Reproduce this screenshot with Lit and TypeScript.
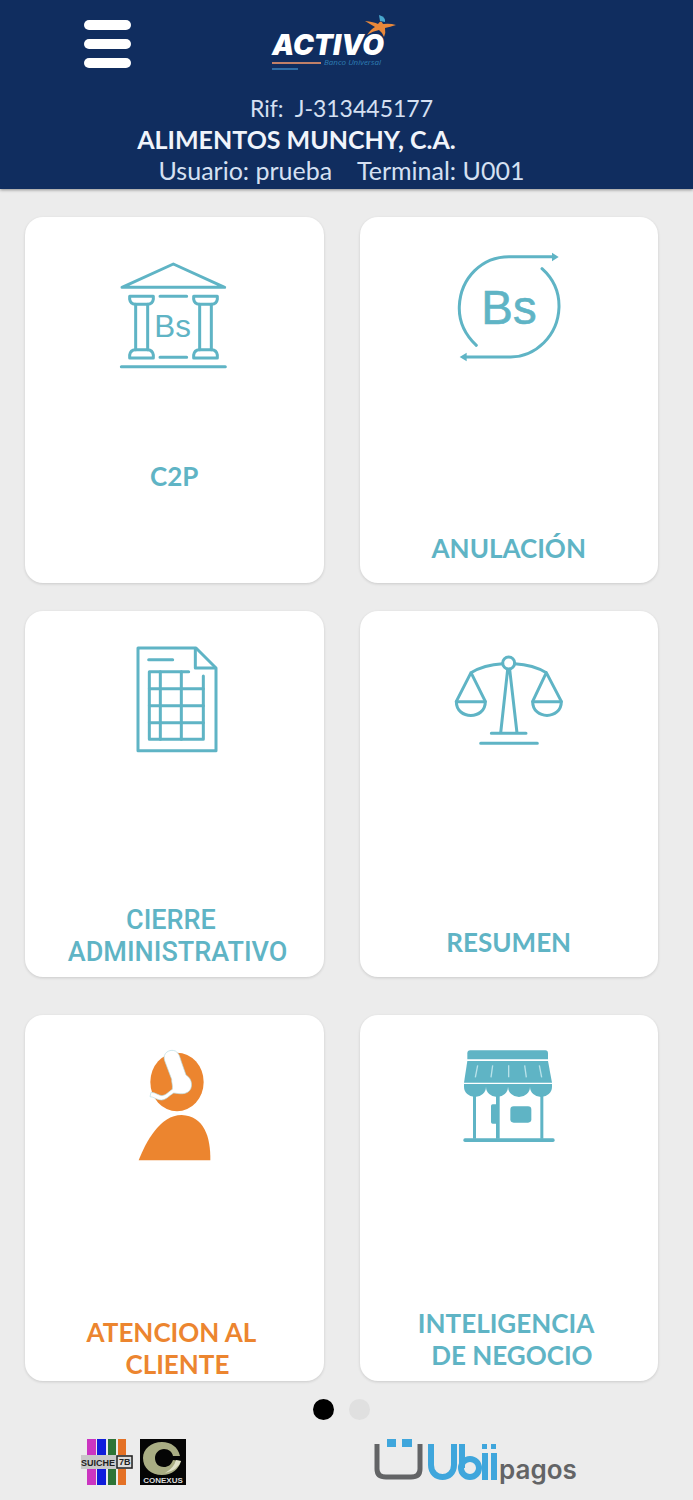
import { LitElement, html, css, svg, type TemplateResult } from "lit";
import { customElement, property } from "lit/decorators.js";

const bank = svg`<svg viewBox="27 15 390 390" aria-hidden="true">
  <g class="line">
    <path d="M66 142 L220 72 L374 142 Z"/>
    <path d="M64 380H376M180 169H260M180 352H260"/>
    <path d="M89 169H160V178Q158 192 143 193H106Q91 192 89 178Z"/>
    <path d="M281 169H352V178Q350 192 335 193H298Q283 192 281 178Z"/>
    <path d="M89 354H160V345Q158 330 143 329H106Q91 330 89 345Z"/>
    <path d="M281 354H352V345Q350 330 335 329H298Q283 330 281 345Z"/>
    <path d="M107 193V329M143 193V329M299 193V329M334 193V329"/>
  </g>
  <text class="bs" x="163" y="292" font-size="94">Bs</text>
</svg>`;

const refund = svg`<svg viewBox="40 15 390 390" aria-hidden="true">
  <g class="line">
    <path d="M137 316C97 278 84 240 86 198C90 112 155 50 235 50H368"/>
    <path d="M334 86C372 120 386 160 385 202C382 288 315 350 240 351H104"/>
  </g>
  <path class="solid" d="M364 38L384 51L364 64ZM108 338L87 351L108 364Z"/>
  <text class="bs thick" x="152" y="253" font-size="142">Bs</text>
</svg>`;

const sheet = svg`<svg viewBox="-33 27 390 390" aria-hidden="true">
  <g class="line">
    <path d="M54 54H228L288 114V362H54Z"/>
    <path d="M226 56V114H286M86 89H158"/>
    <path d="M206 125H88V328H250V138"/>
    <path d="M88 176H250M88 227H250M88 278H250M121 125V328M184 125V328"/>
  </g>
</svg>`;

const scales = svg`<svg viewBox="10 -3 390 390" aria-hidden="true">
  <g class="line">
    <circle cx="204" cy="69" r="18"/>
    <path d="M186 71Q130 74 91 98L47 184M91 98L134 184M222 71Q278 74 317 98L276 184M317 98L362 184"/>
    <path d="M47 185H134C134 240 47 240 47 185ZM276 185H362C362 240 276 240 276 185Z"/>
    <path d="M201 88L180 279M207 88L229 279M152 280H256M120 310H290"/>
  </g>
</svg>`;

const agent = svg`<svg viewBox="-33 39 390 390" aria-hidden="true">
  <ellipse class="solid" cx="171" cy="156" rx="80" ry="88"/>
  <path class="solid" d="M56 391C78 335 120 255 185 255C252 258 272 320 271 391Z"/>
  <path class="headset" d="M134 92C126 68 150 56 166 63C178 69 180 84 185 98L198 135C218 146 220 176 204 186C190 195 174 190 161 189C146 198 138 210 124 210C110 210 101 200 90 200L93 187C106 187 116 197 126 197C138 196 145 186 157 178C159 165 154 156 155 148Z"/>
</svg>`;

const shop = svg`<svg viewBox="10 39 390 390" aria-hidden="true">
  <g class="solid">
    <path d="M80 88V70Q80 61 89 61H314Q322 61 322 70V88Z"/>
    <path d="M80 93H322L334 158H70Z"/>
    <path d="M70 162H136V170A33 31 0 0 1 70 170ZM136 162H202V170A33 31 0 0 1 136 170ZM202 162H268V170A33 31 0 0 1 202 170ZM268 162H334V170A33 31 0 0 1 268 170Z"/>
    <path d="M97 196H106V326H97ZM166 196H177V326H166ZM299 196H308V326H299Z"/>
    <rect x="151" y="223" width="20" height="58" rx="5"/>
    <rect x="209" y="229" width="63" height="49" rx="10"/>
    <rect x="68" y="325" width="274" height="11" rx="5"/>
  </g>
  <path class="folds" d="M111 106L104 142M156 106L151 142M204 106V142M252 106L257 142M296 106L303 142"/>
</svg>`;

const activoLogo = svg`<svg class="activo" viewBox="0 0 141 60" role="img" aria-label="Activo Banco Universal">
  <text class="activo-name" x="1" y="41" font-size="28">ACTIVO</text>
  <path fill="#e9883a" d="M94 7Q103 8 107 10Q110 5 112 10Q119 9 125 11Q119 13 114 14Q115 19 113 23Q111 18 108 16Q102 17 96 21Q100 15 104 13Z"/>
  <path fill="#49a8cf" d="M108 1Q115 3 114 8L109 7Z"/>
  <path fill="#c08068" d="M1 48H50V50H1Z"/>
  <text class="activo-sub" x="53" y="51" font-size="8">Banco Universal</text>
  <path fill="#2f6da5" d="M1 54H27V56H1Z"/>
</svg>`;

const suiche = svg`<svg class="suiche" viewBox="0 0 54 46" role="img" aria-label="Suiche 7B">
  <path fill="#cb35c1" d="M7 0H16V46H7Z"/>
  <path fill="#101ddb" d="M17 0H26V46H17Z"/>
  <path fill="#2d7436" d="M28 0H36V46H28Z"/>
  <path fill="#e47125" d="M38 0H46V46H38Z"/>
  <path fill="#c9c9c9" d="M1 16H53V30H1Z"/>
  <text x="1" y="27" class="suiche-name">SUICHE</text>
  <rect x="37" y="17" width="15" height="12" fill="#ddd" stroke="#222" stroke-width="1.500"/>
  <text x="39" y="26" class="suiche-name">7B</text>
</svg>`;

const conexus = svg`<svg class="conexus" viewBox="0 0 46 46" role="img" aria-label="Conexus">
  <path fill="#050505" d="M0 0H46V46H0Z"/>
  <path fill="#a9ad83" d="M40 17C38 8 31 3 22 3C11 3 3 10 3 19C3 29 11 36 22 36C32 36 39 30 41 22L33 21C31 26 28 28 24 28C18 28 15 24 15 19C15 14 19 10 24 10C29 10 32 13 33 17Z"/>
  <path fill="#dfe0c8" d="M25 34Q38 31 41 22L36 21Q34 29 25 34Z"/>
  <text x="23" y="44" font-size="8" class="conexus-name" text-anchor="middle">CONEXUS</text>
</svg>`;

const ubii = svg`<svg class="ubii" viewBox="0 0 206 50" role="img" aria-label="Ubii pagos">
  <path fill="none" stroke="#636466" stroke-width="5" d="M3 6V31Q3 39 12 39H37Q46 39 46 31V6"/>
  <path fill="#3fa6dc" d="M13 1H22V9H13ZM28 1H38V9H28Z"/>
  <g fill="none" stroke="#3fa6dc" stroke-width="6">
    <path d="M57 6V27C57 43 80 43 80 27V6"/>
    <path d="M88 6V30"/>
    <circle cx="96" cy="30" r="9"/>
    <path d="M111 15V42M120 15V42"/>
  </g>
  <path fill="#3fa6dc" d="M108 6H113V11H108ZM117 6H122V11H117Z"/>
  <text x="125" y="41" font-size="26" class="pagos">pagos</text>
</svg>`;

@customElement("menu-card")
export class MenuCard extends LitElement {
  @property() label = "";
  @property({ attribute: false }) icon?: TemplateResult;

  static styles = css`
    :host {
      display: block;
      --ink: #5fb4c5;
      --drop: 19px;
      --face: 26px/32px Lato, sans-serif;
    }
    :host([accent]) { --ink: #ec852f; }
    :host([raised]) { --drop: 91px; }
    :host([low]) { --drop: 1px; }
    :host([mid]) { --drop: 10px; }
    :host([plain]) { --face: 27px/32px Roboto, sans-serif; --weight: 500; --drop: 9px; }
    .card {
      width: 100%;
      min-height: 366px;
      box-sizing: border-box;
      display: flex;
      flex-direction: column;
      align-items: center;
      justify-content: space-between;
      padding: 28px 0 var(--drop);
      border: 0;
      border-radius: 18px;
      background: #fff;
      box-shadow: 0 1px 3px rgba(0, 0, 0, 0.14);
      color: var(--ink);
      font: var(--weight, 700) var(--face);
      cursor: pointer;
    }
    .label { white-space: pre; }
    svg { display: block; width: 130px; height: 130px; }
    .line { fill: none; stroke: var(--ink); stroke-width: 9; stroke-linecap: round; stroke-linejoin: round; }
    .solid { fill: var(--ink); }
    .bs { fill: var(--ink); font-family: "Liberation Sans", sans-serif; font-weight: 400; }
    .thick { stroke: var(--ink); stroke-width: 2; }
    .headset { fill: #fff; stroke: #b5dde6; stroke-width: 2; }
    .folds { fill: none; stroke: #b9e2ea; stroke-width: 4; }
  `;

  render() {
    return html`<button class="card" type="button">${this.icon}<span class="label">${this.label}</span></button>`;
  }
}

@customElement("app-root")
export class AppRoot extends LitElement {
  static styles = css`
    :host {
      display: block;
      min-height: 100vh;
      background: #ececec;
      font-family: Lato, sans-serif;
    }
    header {
      background: #102d5f;
      color: #d5e0f2;
      padding: 14px 35px 3px 25px;
      box-shadow: 0 1px 3px rgba(0, 0, 0, 0.4);
    }
    .bar { display: grid; grid-template-columns: 1fr auto 1fr; align-items: center; }
    .menu {
      justify-self: start;
      margin-left: 59px;
      width: 47px;
      height: 48px;
      padding: 0;
      border: 0;
      background: none;
      display: flex;
      flex-direction: column;
      justify-content: space-between;
      cursor: pointer;
    }
    .menu span { height: 10px; border-radius: 5px; background: #fff; }
    .activo { display: block; width: 141px; height: 60px; }
    .activo-name { fill: #fff; font-family: Inter, sans-serif; font-weight: 900; font-style: italic; }
    .activo-sub { fill: #2f7fb5; font-family: "Open Sans", sans-serif; font-style: italic; }
    .info { padding-top: 19px; text-align: center; font-size: 25px; line-height: 31px; }
    .info p { margin: 0; white-space: pre; }
    .info .rif { font-size: 23px; }
    .info .company { padding-right: 90px; color: #f0f4fb; font-weight: 700; }
    main {
      display: grid;
      grid-template-columns: 1fr 1fr;
      column-gap: 36px;
      row-gap: 28px;
      padding: 28px 35px 0 25px;
    }
    .last { margin-top: 10px; }
    .dots { display: flex; justify-content: center; gap: 15px; padding: 18px 35px 0 25px; }
    .dot { width: 21px; height: 21px; padding: 0; border: 0; border-radius: 50%; background: #e0e0e0; }
    .dot.on { background: #000; }
    footer { display: flex; justify-content: space-between; align-items: flex-start; padding: 18px 113px 12px 80px; }
    .partners { display: flex; gap: 6px; padding-top: 1px; }
    .partners svg, .ubii { display: block; }
    .suiche { width: 54px; height: 46px; }
    .conexus { width: 46px; height: 46px; }
    .ubii { width: 206px; height: 50px; }
    .suiche-name { font-family: "Liberation Sans", sans-serif; font-weight: 700; fill: #222; font-size: 9px; }
    .conexus-name { font-family: "Liberation Sans", sans-serif; font-weight: 700; fill: #ddd; }
    .pagos { font-family: Inter, sans-serif; font-weight: 600; fill: #636466; }
  `;

  render() {
    return html`
      <header>
        <div class="bar">
          <button class="menu" type="button" aria-label="Menú"><span></span><span></span><span></span></button>
          ${activoLogo}
        </div>
        <div class="info">
          <p class="rif">Rif:  J-313445177</p>
          <p class="company">ALIMENTOS MUNCHY, C.A.</p>
          <p>Usuario: prueba    Terminal: U001</p>
        </div>
      </header>
      <main>
        <menu-card raised .icon=${bank} label="C2P"></menu-card>
        <menu-card .icon=${refund} label="ANULACIÓN"></menu-card>
        <menu-card plain .icon=${sheet} .label=${"CIERRE \n ADMINISTRATIVO"}></menu-card>
        <menu-card .icon=${scales} label="RESUMEN"></menu-card>
        <menu-card class="last" accent low .icon=${agent} .label=${"ATENCION AL \n CLIENTE"}></menu-card>
        <menu-card class="last" mid .icon=${shop} .label=${"INTELIGENCIA \n DE NEGOCIO"}></menu-card>
      </main>
      <nav class="dots" aria-label="Páginas">
        <button class="dot on" type="button" aria-label="Página 1"></button>
        <button class="dot" type="button" aria-label="Página 2"></button>
      </nav>
      <footer>
        <div class="partners">${suiche}${conexus}</div>
        ${ubii}
      </footer>
    `;
  }
}
